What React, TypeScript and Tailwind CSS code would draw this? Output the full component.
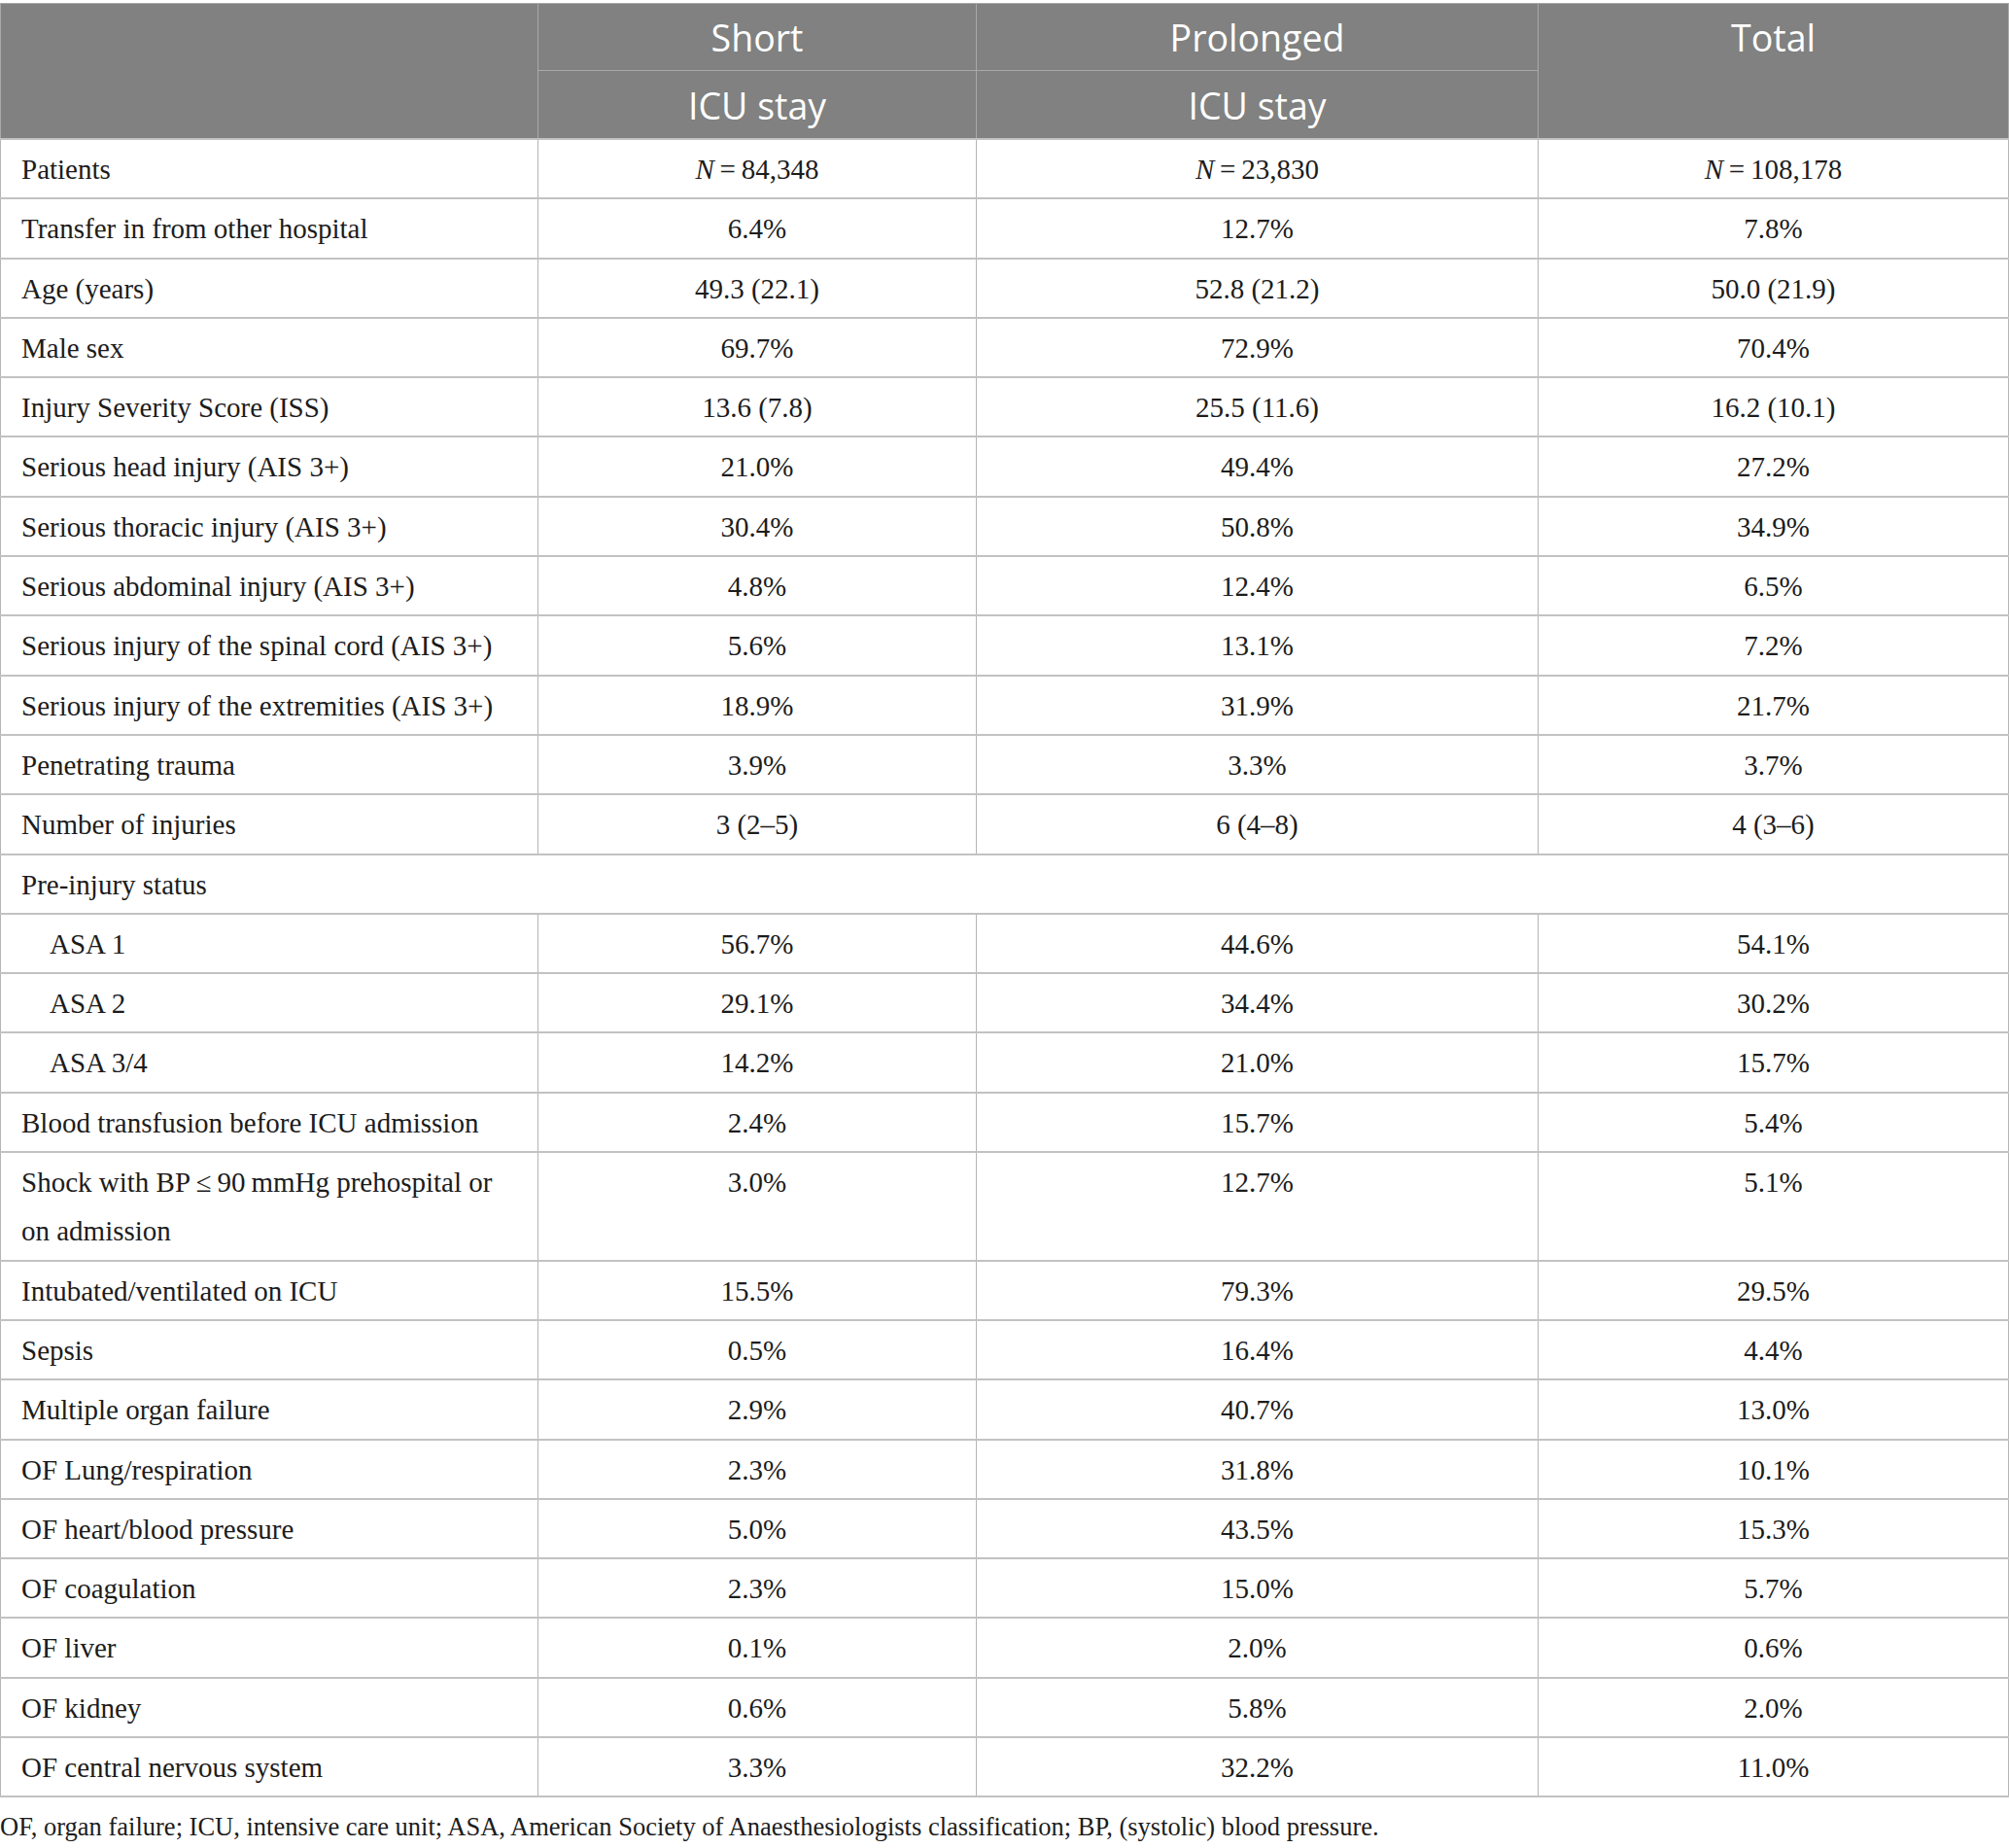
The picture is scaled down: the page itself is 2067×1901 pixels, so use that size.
import React from "react";

type Row = { label: React.ReactNode; vals?: React.ReactNode[]; indent?: boolean; span?: boolean };

const N = (v: string) => (
  <>
    <i>N</i>
    {"\u2009=\u2009"}
    {v}
  </>
);

const rows: Row[] = [
  { label: "Patients", vals: [N("84,348"), N("23,830"), N("108,178")] },
  { label: "Transfer in from other hospital", vals: ["6.4%", "12.7%", "7.8%"] },
  { label: "Age (years)", vals: ["49.3 (22.1)", "52.8 (21.2)", "50.0 (21.9)"] },
  { label: "Male sex", vals: ["69.7%", "72.9%", "70.4%"] },
  { label: "Injury Severity Score (ISS)", vals: ["13.6 (7.8)", "25.5 (11.6)", "16.2 (10.1)"] },
  { label: "Serious head injury (AIS 3+)", vals: ["21.0%", "49.4%", "27.2%"] },
  { label: "Serious thoracic injury (AIS 3+)", vals: ["30.4%", "50.8%", "34.9%"] },
  { label: "Serious abdominal injury (AIS 3+)", vals: ["4.8%", "12.4%", "6.5%"] },
  { label: "Serious injury of the spinal cord (AIS 3+)", vals: ["5.6%", "13.1%", "7.2%"] },
  { label: "Serious injury of the extremities (AIS 3+)", vals: ["18.9%", "31.9%", "21.7%"] },
  { label: "Penetrating trauma", vals: ["3.9%", "3.3%", "3.7%"] },
  { label: "Number of injuries", vals: ["3 (2–5)", "6 (4–8)", "4 (3–6)"] },
  { label: "Pre-injury status", span: true },
  { label: "ASA 1", vals: ["56.7%", "44.6%", "54.1%"], indent: true },
  { label: "ASA 2", vals: ["29.1%", "34.4%", "30.2%"], indent: true },
  { label: "ASA 3/4", vals: ["14.2%", "21.0%", "15.7%"], indent: true },
  { label: "Blood transfusion before ICU admission", vals: ["2.4%", "15.7%", "5.4%"] },
  {
    label: (
      <>
        Shock with BP{"\u2009≤\u2009"}90{"\u2009"}mmHg prehospital or
        <br />
        on admission
      </>
    ),
    vals: ["3.0%", "12.7%", "5.1%"],
  },
  { label: "Intubated/ventilated on ICU", vals: ["15.5%", "79.3%", "29.5%"] },
  { label: "Sepsis", vals: ["0.5%", "16.4%", "4.4%"] },
  { label: "Multiple organ failure", vals: ["2.9%", "40.7%", "13.0%"] },
  { label: "OF Lung/respiration", vals: ["2.3%", "31.8%", "10.1%"] },
  { label: "OF heart/blood pressure", vals: ["5.0%", "43.5%", "15.3%"] },
  { label: "OF coagulation", vals: ["2.3%", "15.0%", "5.7%"] },
  { label: "OF liver", vals: ["0.1%", "2.0%", "0.6%"] },
  { label: "OF kidney", vals: ["0.6%", "5.8%", "2.0%"] },
  { label: "OF central nervous system", vals: ["3.3%", "32.2%", "11.0%"] },
];

const th =
  "border border-[#a9a9a9] text-white font-normal text-[37.5px] text-center pt-[2px] pb-0 px-2";
const td =
  "border-x border-y-2 border-x-[#b5b5b5] border-y-[#c2c2c2] align-top pt-[5px] pb-[4px] leading-[50.3px]";

export default function App() {
  return (
    <div className="w-[2067px] bg-white pt-[3px] text-[#1c1c1c] font-['Liberation_Serif','Times_New_Roman',serif]">
      <table className="w-[2066px] table-fixed border-collapse border border-[#b5b5b5] text-[29px]">
        <colgroup>
          <col className="w-[553px]" />
          <col className="w-[451px]" />
          <col className="w-[578px]" />
          <col className="w-[484px]" />
        </colgroup>
        <thead className="bg-[#808180] font-['Open_Sans','Noto_Sans',sans-serif]">
          <tr>
            <th rowSpan={2} className={th}></th>
            <th className={`${th} h-[68px] leading-[66px]`}>Short</th>
            <th className={`${th} h-[68px] leading-[66px]`}>Prolonged</th>
            <th rowSpan={2} className={`${th} align-top leading-[66px]`}>
              Total
            </th>
          </tr>
          <tr>
            <th className={`${th} h-[69px] leading-[67px]`}>ICU stay</th>
            <th className={`${th} h-[69px] leading-[67px]`}>ICU stay</th>
          </tr>
        </thead>
        <tbody>
          {rows.map((r, i) =>
            r.span ? (
              <tr key={i}>
                <td colSpan={4} className={`${td} pl-[21px] text-left`}>
                  {r.label}
                </td>
              </tr>
            ) : (
              <tr key={i}>
                <td className={`${td} ${r.indent ? "pl-[50px]" : "pl-[21px]"} pr-2 text-left`}>
                  {r.label}
                </td>
                {r.vals!.map((v, j) => (
                  <td key={j} className={`${td} text-center px-2`}>
                    {v}
                  </td>
                ))}
              </tr>
            )
          )}
        </tbody>
      </table>
      <p className="mt-[12px] text-[26.5px] leading-[36px] text-[#1c1c1c]">
        OF, organ failure; ICU, intensive care unit; ASA, American Society of Anaesthesiologists
        classification; BP, (systolic) blood pressure.
      </p>
    </div>
  );
}
